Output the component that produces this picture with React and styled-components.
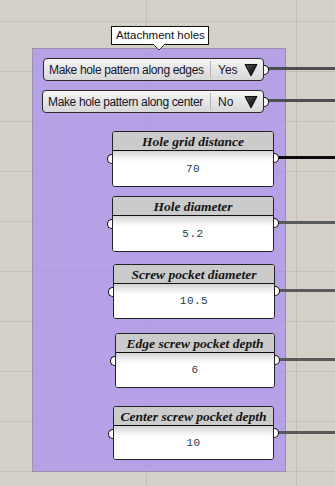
import styled, { createGlobalStyle } from "styled-components";

const GlobalStyle = createGlobalStyle`
  html, body {
    margin: 0;
    padding: 0;
  }
  body {
    width: 335px;
    height: 486px;
    overflow: hidden;
    background-color: #d4d0c8;
    background-image:
      linear-gradient(to bottom, #c3bfb7 1px, transparent 1px),
      linear-gradient(to right, #c3bfb7 1px, transparent 1px);
    background-size: 150px 50px, 150px 50px;
    background-position: 0 21px, 146px 0;
    font-family: "Liberation Sans", Arial, sans-serif;
  }
`;

// purple group that holds all the inputs
const Group = styled.div`
  position: relative;
  box-sizing: border-box;
  margin: 48px 0 0 32px;
  width: 254px;
  height: 424px;
  padding-top: 9px;
  background: rgba(172, 145, 240, 0.74);
  border: 1px solid #9a90b0;
  display: flex;
  flex-direction: column;
`;

const Tip = styled.div`
  position: absolute;
  top: -23px;
  left: 78px;
  box-sizing: border-box;
  height: 19px;
  padding: 0 3px 0 4px;
  background: #fff;
  border: 1px solid #111;
  font-size: 11.5px;
  line-height: 17px;
  color: #111;
  white-space: nowrap;
`;

const TipPointer = styled.svg`
  position: absolute;
  top: 17px;
  left: 40px;
`;

const Item = styled.div`
  position: relative;
  margin-top: ${(p) => p.$mt}px;
  margin-left: ${(p) => p.$ml}px;
  width: ${(p) => p.$w}px;
`;

const Wire = styled.span`
  position: absolute;
  left: calc(100% + 2px);
  top: ${(p) => p.$y}px;
  width: ${(p) => p.$len}px;
  height: 3px;
  background: ${(p) => p.$color};
  border-radius: 1px 0 0 1px;
`;

const OutNub = styled.span`
  position: absolute;
  right: -5px;
  top: ${(p) => p.$y}px;
  width: 4px;
  height: 8px;
  background: #fff;
  border: 1.5px solid #111;
  border-left: none;
  border-radius: 0 5px 5px 0;
  z-index: 2;
`;

const InNub = styled.span`
  position: absolute;
  left: -5px;
  top: ${(p) => p.$y}px;
  width: 4px;
  height: 8px;
  background: #fff;
  border: 1.5px solid #111;
  border-right: none;
  border-radius: 5px 0 0 5px;
`;

const ListBox = styled.div`
  box-sizing: border-box;
  height: 23px;
  display: flex;
  align-items: center;
  border: 1px solid #2a2a2a;
  border-radius: 4px;
  background: linear-gradient(to bottom, #f6f6f6, #e2e2e2 60%, #d8d8d8);
  font-size: 12px;
  color: #141428;
`;

const ListLabel = styled.span`
  padding-left: 5px;
  width: ${(p) => p.$w}px;
  box-sizing: border-box;
  white-space: nowrap;
  letter-spacing: -0.35px;
`;

const ListDivider = styled.span`
  width: 1px;
  height: 17px;
  background: #b4b4b4;
`;

const ListValue = styled.span`
  flex: 1;
  padding-left: 7px;
`;

const Arrow = styled.svg`
  margin-right: 5px;
`;

const Panel = styled.div`
  box-sizing: border-box;
  height: ${(p) => p.$h}px;
  border: 1px solid #222;
  border-radius: 3px;
  overflow: hidden;
  display: flex;
  flex-direction: column;
  background: #fff;
`;

const PanelHead = styled.div`
  height: 18px;
  flex: none;
  background: #cbcbcb;
  border-bottom: 1px solid #111;
  text-align: center;
  font-family: "Liberation Serif", "Times New Roman", serif;
  font-weight: bold;
  font-style: italic;
  font-size: 13.5px;
  line-height: 19px;
  color: #141414;
  white-space: nowrap;
`;

const PanelBody = styled.div`
  flex: 1;
  display: flex;
  align-items: center;
  justify-content: center;
  background: linear-gradient(to bottom, #d2d2d2, #f2f2f2 7px, #fff 11px);
  font-family: "Liberation Mono", "Courier New", monospace;
  font-size: 11px;
  color: #1c3c4e;
  letter-spacing: 0.5px;
`;

const lists = [
  { label: "Make hole pattern along edges", value: "Yes", mt: 0, ml: 10, w: 221, lw: 166 },
  { label: "Make hole pattern along center", value: "No", mt: 9, ml: 9, w: 222, lw: 167 },
];

const params = [
  { title: "Hole grid distance", value: "70", mt: 18, ml: 79, w: 162, h: 56, wire: "#0a0a0a" },
  { title: "Hole diameter", value: "5.2", mt: 9, ml: 79, w: 162, h: 56, wire: "#5a5a5a" },
  { title: "Screw pocket diameter", value: "10.5", mt: 12, ml: 80, w: 162, h: 55, wire: "#5a5a5a" },
  { title: "Edge screw pocket depth", value: "6", mt: 14, ml: 82, w: 160, h: 55, wire: "#5a5a5a" },
  { title: "Center screw pocket depth", value: "10", mt: 18, ml: 80, w: 161, h: 54, wire: "#5a5a5a" },
];

// wire runs from the output nub to the right edge of the page
const wireLen = (ml, w) => 335 - (33 + ml + w + 2);

const DropArrow = () => (
  <Arrow width="14" height="14" viewBox="0 0 14 14">
    <defs>
      <linearGradient id="ag" x1="0" y1="0" x2="1" y2="1">
        <stop offset="0" stopColor="#555" />
        <stop offset="1" stopColor="#000" />
      </linearGradient>
    </defs>
    <path d="M1 1.5 L13 1.5 L7 13 Z" fill="url(#ag)" stroke="#111" strokeWidth="1" strokeLinejoin="round" />
  </Arrow>
);

const App = () => {
  return (
    <>
      <GlobalStyle />
      <Group>
        <Tip>
          Attachment holes
          <TipPointer width="14" height="8" viewBox="0 0 14 8">
            <path d="M1 0 L7 6 L13 0" fill="#fff" stroke="#333" strokeWidth="1" />
          </TipPointer>
        </Tip>

        {lists.map((l) => (
          <Item key={l.label} $mt={l.mt} $ml={l.ml} $w={l.w}>
            <ListBox>
              <ListLabel $w={l.lw}>{l.label}</ListLabel>
              <ListDivider />
              <ListValue>{l.value}</ListValue>
              <DropArrow />
            </ListBox>
            <OutNub $y={7} />
            <Wire $y={9} $len={wireLen(l.ml, l.w)} $color="#4e4e4e" />
          </Item>
        ))}

        {params.map((p) => (
          <Item key={p.title} $mt={p.mt} $ml={p.ml} $w={p.w}>
            <InNub $y={23} />
            <Panel $h={p.h}>
              <PanelHead>{p.title}</PanelHead>
              <PanelBody>{p.value}</PanelBody>
            </Panel>
            <OutNub $y={22} />
            <Wire $y={25} $len={wireLen(p.ml, p.w)} $color={p.wire} />
          </Item>
        ))}
      </Group>
    </>
  );
};

export default App;
